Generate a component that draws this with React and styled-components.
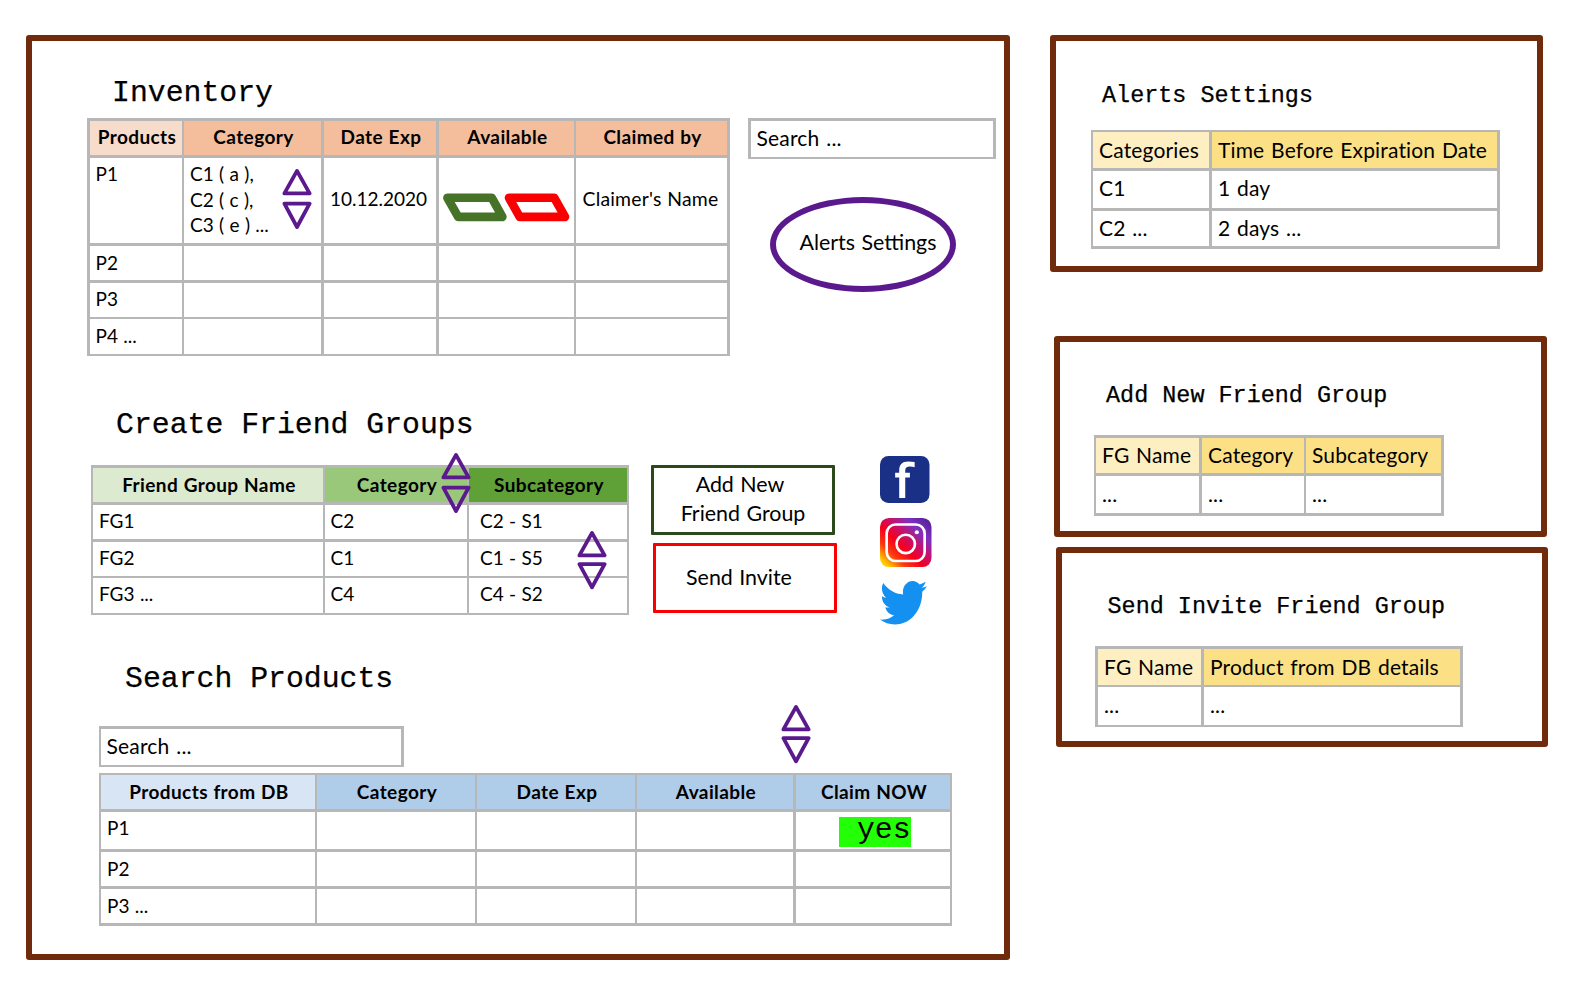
import React from "react";
import styled, { createGlobalStyle } from "styled-components";

const LINE = "#b7b7b7";
const BROWN = "#702b0d";
const PURPLE = "#5a1a8e";

const GlobalStyle = createGlobalStyle`
  *, *::before, *::after { box-sizing: border-box; }
  body {
    margin: 0;
    background: #fff;
    color: #000;
    font-family: Lato, "Liberation Sans", sans-serif;
  }
`;

const Page = styled.div`
  display: flex;
  align-items: flex-start;
  width: 1572px;
  height: 998px;
  padding: 35px 0 0 26px;
  overflow: hidden;
`;

const Frame = styled.section`
  border: 6px solid ${BROWN};
  border-radius: 3px;
  width: ${(p) => p.$w}px;
  height: ${(p) => p.$h}px;
`;

const MainFrame = styled(Frame)`
  flex: none;
  padding-top: 35px;
`;

const SideColumn = styled.div`
  display: flex;
  flex-direction: column;
  padding-left: 40px;
`;

const SidePanel = styled(Frame)`
  margin: ${(p) => p.$top}px 0 0 ${(p) => p.$left}px;
  padding: ${(p) => p.$pad}px 0 0 ${(p) => p.$inset}px;
`;

const Section = styled.div`
  padding-left: ${(p) => p.$left}px;
  margin-bottom: ${(p) => p.$after || 0}px;
`;

const Heading = styled.h1`
  margin: 0 0 ${(p) => p.$gap}px ${(p) => p.$indent}px;
  font: 400 29.8px/34px "Courier New", "Liberation Mono", monospace;
  -webkit-text-stroke: 0.25px #000;
  white-space: pre;
`;

const PanelHeading = styled.h2`
  margin: 0 0 ${(p) => p.$gap}px ${(p) => p.$indent}px;
  font: 400 23.45px/28px "Courier New", "Liberation Mono", monospace;
  -webkit-text-stroke: 0.25px #000;
  white-space: pre;
`;

const Row = styled.div`
  display: flex;
  align-items: flex-start;
`;

const TableWrap = styled.div`
  position: relative;
  width: max-content;
`;

const Grid = styled.div`
  display: grid;
  width: max-content;
  grid-template-columns: ${(p) => p.$cols};
  grid-template-rows: ${(p) => p.$rows};
  border-style: solid;
  border-color: ${LINE};
  border-width: ${(p) => p.$top}px 0 0 ${(p) => p.$left}px;
  font-size: ${(p) => (p.$large ? 21 : 19)}px;
  letter-spacing: ${(p) => (p.$large ? 0.15 : 0)}px;
  word-spacing: ${(p) => (p.$large ? 1.2 : 0.5)}px;
`;

const Cell = styled.div`
  border-style: solid;
  border-color: ${LINE};
  border-width: 0 ${(p) => p.$r}px ${(p) => p.$b}px 0;
  background: ${(p) => p.$bg || "#fff"};
  padding: ${(p) => (p.$large ? 5 : 3.7) - p.$lift}px 0 0 ${(p) => (p.$center ? 2 : p.$pad || 6)}px;
  line-height: 25.5px;
  font-weight: ${(p) => (p.$bold ? 700 : 400)};
  letter-spacing: ${(p) => (p.$bold ? "0.4px" : "inherit")};
  text-align: ${(p) => (p.$center ? "center" : "left")};
  white-space: pre;
  overflow: hidden;
`;

const MiddleText = styled.div`
  padding-top: 25px;
`;

const ClaimerName = styled(MiddleText)`
  font-size: 19.4px;
  letter-spacing: 0.2px;
`;

const Options = styled.div`
  padding-top: 30px;
`;

const Highlight = styled.span`
  display: block;
  width: 72px;
  height: 30px;
  margin: 2px 0 0 37px;
  background: #22ff06;
  font: 400 29.8px/27.5px "Courier New", "Liberation Mono", monospace;
  letter-spacing: 0;
  word-spacing: 0;
`;

const SearchBox = styled.div`
  width: ${(p) => p.$w}px;
  height: 41px;
  margin-bottom: ${(p) => p.$mb || 0}px;
  border: solid ${LINE};
  border-width: 3px 3px 2px ${(p) => p.$l}px;
  padding: 3.8px 0 0 5.5px;
  font-size: 21px;
  line-height: 25.5px;
  letter-spacing: 0.2px;
  word-spacing: 1.2px;
`;

const Tools = styled.div`
  display: flex;
  flex-direction: column;
  padding-left: 18px;
`;

const AlertsButton = styled.div`
  width: 186px;
  height: 95px;
  margin: 38px 0 0 22px;
  border: 6.5px solid ${PURPLE};
  border-radius: 50%;
  padding: 25.5px 0 0 23.5px;
  font-size: 21.4px;
  line-height: 26px;
  word-spacing: 1px;
  white-space: nowrap;
`;

const Actions = styled.div`
  display: flex;
  flex-direction: column;
  gap: 8px;
  margin-left: 22px;
`;

const ActionButton = styled.div`
  width: 184px;
  height: 70px;
  margin-left: ${(p) => p.$ml || 0}px;
  border: 3px solid ${(p) => p.$color};
  border-radius: 1px;
  padding-top: ${(p) => p.$pad}px;
  padding-right: ${(p) => p.$pr || 0}px;
  font-size: 21.4px;
  line-height: 29px;
  word-spacing: 1px;
  text-align: center;
  white-space: pre;
`;

const Socials = styled.div`
  display: flex;
  flex-direction: column;
  margin: -9.5px 0 0 43px;
`;

const Logo = styled.svg`
  display: block;
  margin-top: ${(p) => p.$mt || 0}px;
`;

const Sorter = styled.svg`
  position: absolute;
  left: ${(p) => p.$x}px;
  top: ${(p) => p.$y}px;
  width: 30px;
  height: 62px;
  fill: none;
  stroke: ${PURPLE};
  stroke-width: 3.8;
  stroke-linejoin: round;
`;

function SortArrows({ x, y, tight }) {
  return (
    <Sorter $x={x} $y={y} viewBox="0 0 30 62">
      <path d="M15 2.9 27.6 25.4H2.4Z" />
      <path d={tight ? "M15 57.3 27.6 34.2H2.4Z" : "M15 59 27.6 35.7H2.4Z"} />
    </Sorter>
  );
}

const px = (tracks) => tracks.map(([size, line]) => `${size + line}px`).join(" ");

/* cols and rows are [inner size, trailing line thickness] pairs;
   lifts moves the text of a row up by that many pixels */
function Table({ cols, rows, left, top, head, shades, body, large, pads = [], lifts = [] }) {
  return (
    <Grid $cols={px(cols)} $rows={px(rows)} $left={left} $top={top} $large={large}>
      {[head, ...body].map((line, r) =>
        cols.map((col, c) => (
          <Cell
            key={`${r}-${c}`}
            $r={col[1]}
            $b={rows[r][1]}
            $bg={r === 0 ? shades[c] : undefined}
            $bold={r === 0 && !large}
            $center={r === 0 && !large}
            $large={large}
            $pad={pads[c]}
            $lift={lifts[r] || 0}
          >
            {line[c]}
          </Cell>
        ))
      )}
    </Grid>
  );
}

function AvailableOptions() {
  return (
    <Options>
      <Logo width="130" height="32" viewBox="441 190.5 130 32" fill="none" strokeWidth="8.6" strokeLinejoin="round">
        <path d="M447.4 197.3H491.8L502.4 216.4H458.2Z" stroke="#467328" />
        <path d="M509 197.3H554.3L565 216.4H519.7Z" stroke="#fb0000" />
      </Logo>
    </Options>
  );
}

function Facebook() {
  return (
    <Logo width="49.5" height="47" viewBox="0 0 50 47" preserveAspectRatio="none">
      <rect width="50" height="47" rx="8.5" fill="#1a2f86" />
      <path d="M19.4 42V21.4H15.3V16.7H19.4V14.2C19.4 8.2 22.5 5.4 28.4 5.4C31 5.4 33.2 5.7 35 6.1V11.3C33.5 10.9 31.8 10.6 30.2 10.6C27 10.6 25.5 11.9 25.5 14.4V16.7H30.2V21.4H25.5V42Z" fill="#fff" />
    </Logo>
  );
}

function Instagram() {
  return (
    <Logo width="51.5" height="49.5" viewBox="0 0 52 50" preserveAspectRatio="none" $mt={15.5}>
      <defs>
        <linearGradient id="insta" x1="0" y1="1" x2="1" y2="0">
          <stop offset="0" stopColor="#ffe600" />
          <stop offset="0.1" stopColor="#ffc400" />
          <stop offset="0.25" stopColor="#fb3a10" />
          <stop offset="0.42" stopColor="#f5001c" />
          <stop offset="0.58" stopColor="#c8106a" />
          <stop offset="0.75" stopColor="#8030c0" />
          <stop offset="1" stopColor="#4a1f90" />
        </linearGradient>
      </defs>
      <rect width="52" height="49.5" rx="9" fill="url(#insta)" />
      <g fill="none" stroke="#fff" strokeWidth="2.7">
        <rect x="6.7" y="6.6" width="38.4" height="36.8" rx="9" />
        <circle cx="26" cy="26.2" r="9.3" />
      </g>
      <circle cx="37.2" cy="14.4" r="2.1" fill="#fff" />
    </Logo>
  );
}

function Twitter() {
  return (
    <Logo width="47" height="43.5" viewBox="0 48 512 416" preserveAspectRatio="none" $mt={13.5}>
      <path
        fill="#1490f0"
        d="M459.37 151.716c.325 4.548.325 9.097.325 13.645 0 138.72-105.583 298.558-298.558 298.558-59.452 0-114.68-17.219-161.137-47.106 8.447.974 16.568 1.299 25.34 1.299 49.055 0 94.213-16.568 130.274-44.832-46.132-.975-84.792-31.188-98.112-72.772 6.498.974 12.995 1.624 19.818 1.624 9.421 0 18.843-1.3 27.614-3.573-48.081-9.747-84.143-51.98-84.143-102.985v-1.299c13.969 7.797 30.214 12.67 47.431 13.319-28.264-18.843-46.781-51.005-46.781-87.391 0-19.492 5.197-37.36 14.294-52.954 51.655 63.675 129.3 105.258 216.365 109.807-1.624-7.797-2.599-15.918-2.599-24.04 0-57.828 46.782-104.934 104.934-104.934 30.213 0 57.502 12.67 76.67 33.137 23.715-4.548 46.456-13.32 66.599-25.34-7.798 24.366-24.366 44.833-46.132 57.827 21.117-2.273 41.584-8.122 60.426-16.243-14.292 20.791-32.161 39.308-52.628 54.253z"
      />
    </Logo>
  );
}

const ORANGE = "#f4be9c";
const GOLD = "#fce086";
const CREAM = "#feefc2";
const BLUE = "#afcce9";

function InventorySection() {
  return (
    <Section $left={55} $after={52}>
      <Heading $indent={25} $gap={8}>Inventory</Heading>
      <Row>
        <TableWrap>
          <Table
            left={3}
            top={3}
            cols={[[92, 2], [137, 3], [112, 3], [135, 2], [151, 3]]}
            rows={[[34, 3], [85, 3], [34, 3], [34, 2], [35, 2]]}
            shades={["#f8dccb", ORANGE, ORANGE, ORANGE, ORANGE]}
            pads={[5.5, 6, 6, 2, 6.5]}
            lifts={[0.7, 0.7, 0, 0.5, 0]}
            head={["Products", "Category", "Date Exp", "Available", "Claimed by"]}
            body={[
              ["P1", "C1 ( a ),\nC2 ( c ),\nC3 ( e ) ...", <MiddleText>10.12.2020</MiddleText>, <AvailableOptions />, <ClaimerName>Claimer's Name</ClaimerName>],
              ["P2"],
              ["P3"],
              ["P4 ..."],
            ]}
          />
          <SortArrows x={195} y={50} />
        </TableWrap>
        <Tools>
          <SearchBox $w={248} $l={3}>Search ...</SearchBox>
          <AlertsButton>Alerts Settings</AlertsButton>
        </Tools>
      </Row>
    </Section>
  );
}

function FriendGroupsSection() {
  const green = ["#dcebd0", "#9ac87b", "#5fa037"];
  return (
    <Section $left={59} $after={37.5}>
      <Heading $indent={25} $gap={23}>Create Friend Groups</Heading>
      <Row>
        <TableWrap>
          <Table
            left={2}
            top={3}
            cols={[[230, 2], [142, 2], [158, 2]]}
            rows={[[34, 3], [34, 3], [34, 2], [35, 2]]}
            shades={green}
            pads={[6, 5.5, 11]}
            lifts={[0, 0.5, 0.5, 0.5]}
            head={["Friend Group Name", "Category", "Subcategory"]}
            body={[
              ["FG1", "C2", "C2 - S1"],
              ["FG2", "C1", "C1 - S5"],
              ["FG3 ...", "C4", "C4 - S2"],
            ]}
          />
          <SortArrows x={349.5} y={-13.5} />
          <SortArrows x={486} y={64.5} tight />
        </TableWrap>
        <Actions>
          <ActionButton $color="#2b4a1b" $pad={2}>{"Add New \nFriend Group"}</ActionButton>
          <ActionButton $color="#fb0000" $ml={2} $pad={17} $pr={12}>Send Invite</ActionButton>
        </Actions>
        <Socials>
          <Facebook />
          <Instagram />
          <Twitter />
        </Socials>
      </Row>
    </Section>
  );
}

function SearchSection() {
  return (
    <Section $left={67}>
      <Heading $indent={26} $gap={30}>Search Products</Heading>
      <SearchBox $w={305} $l={2} $mb={6}>Search ...</SearchBox>
      <TableWrap>
        <Table
          left={2}
          top={2}
          cols={[[214, 2], [158, 2], [158, 2], [156, 3], [154, 2]]}
          rows={[[34, 3], [37, 3], [34, 3], [34, 3]]}
          shades={["#d7e5f4", BLUE, BLUE, BLUE, BLUE]}
          lifts={[0, 1, 0, 0]}
          head={["Products from DB", "Category", "Date Exp", "Available", "Claim NOW"]}
          body={[["P1", "", "", "", <Highlight> yes</Highlight>], ["P2"], ["P3 ..."]]}
        />
        <SortArrows x={682.3} y={-69} tight />
      </TableWrap>
    </Section>
  );
}

export default function App() {
  return (
    <>
      <GlobalStyle />
      <Page>
        <MainFrame $w={984} $h={925}>
          <InventorySection />
          <FriendGroupsSection />
          <SearchSection />
        </MainFrame>
        <SideColumn>
          <SidePanel $w={493} $h={237} $top={0} $left={0} $pad={41} $inset={35}>
            <PanelHeading $indent={11} $gap={20}>Alerts Settings</PanelHeading>
            <Table
              large
              left={2}
              top={2}
              cols={[[116, 3], [285, 3]]}
              rows={[[36, 3], [37, 3], [35, 3]]}
              shades={[CREAM, GOLD]}
              pads={[6, 6]}
              lifts={[0, 1, 1]}
              head={["Categories", "Time Before Expiration Date"]}
              body={[["C1", "1 day"], ["C2 ...", "2 days ..."]]}
            />
          </SidePanel>
          <SidePanel $w={493} $h={201} $top={64} $left={4} $pad={40} $inset={34}>
            <PanelHeading $indent={12} $gap={25}>Add New Friend Group</PanelHeading>
            <Table
              large
              left={2}
              top={3}
              cols={[[103, 3], [102, 2], [135, 3]]}
              rows={[[35, 3], [37, 3]]}
              shades={[CREAM, GOLD, GOLD]}
              pads={[6, 6, 6]}
              lifts={[1.5, 0]}
              head={["FG Name", "Category", "Subcategory"]}
              body={[["...", "...", "..."]]}
            />
          </SidePanel>
          <SidePanel $w={492} $h={200} $top={10} $left={6} $pad={40} $inset={33}>
            <PanelHeading $indent={12.5} $gap={25}>Send Invite Friend Group</PanelHeading>
            <Table
              large
              left={3}
              top={3}
              cols={[[103, 3], [256, 3]]}
              rows={[[36, 2], [38, 2]]}
              shades={[CREAM, GOLD]}
              pads={[6, 6]}
              head={["FG Name", "Product from DB details"]}
              body={[["...", "..."]]}
            />
          </SidePanel>
        </SideColumn>
      </Page>
    </>
  );
}
